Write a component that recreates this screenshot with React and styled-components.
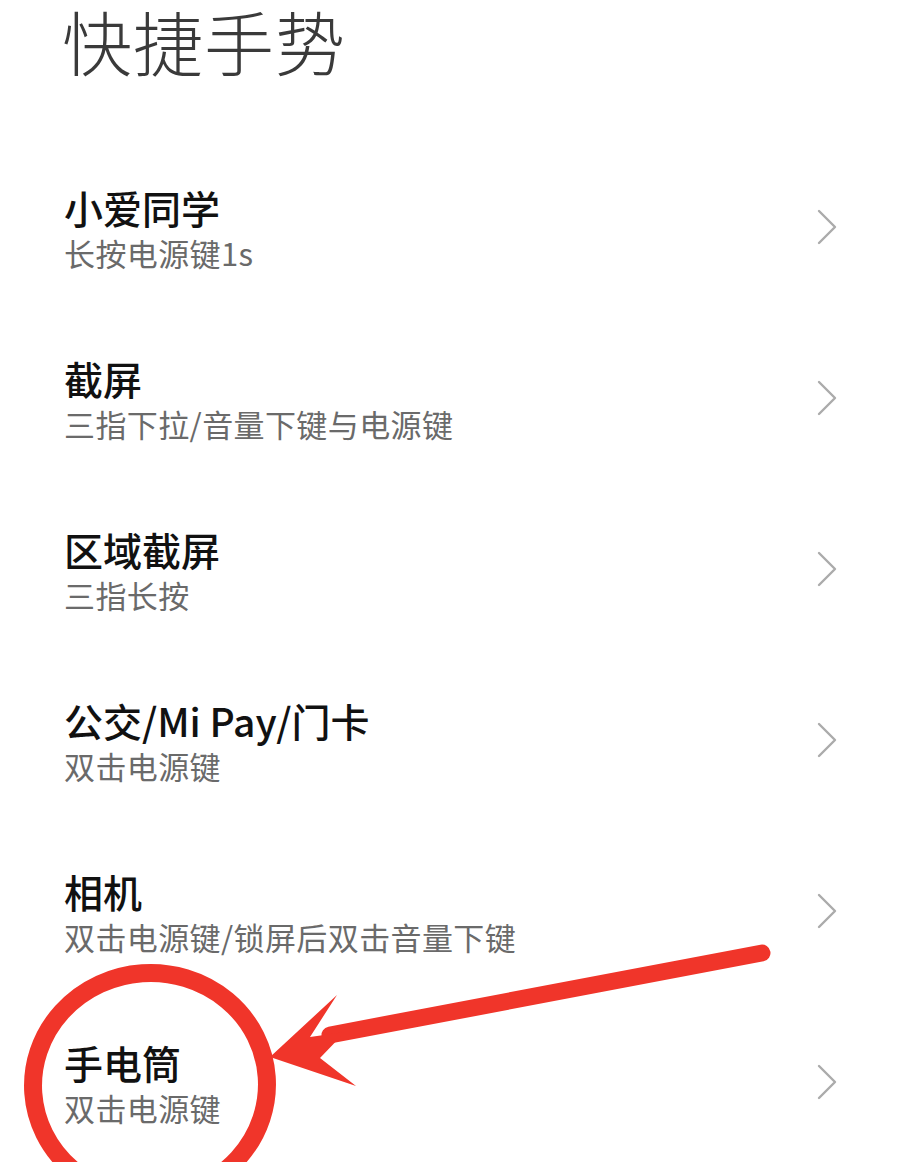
import React from 'react';
import styled, { createGlobalStyle } from 'styled-components';

const GlobalStyle = createGlobalStyle`
  html, body {
    margin: 0;
    padding: 0;
    background: #ffffff;
    overflow: hidden;
  }
  body {
    font-family: "Noto Sans CJK SC", "Noto Sans", sans-serif;
  }
`;

const items = [
  { title: '小爱同学', desc: '长按电源键1s' },
  { title: '截屏', desc: '三指下拉/音量下键与电源键' },
  { title: '区域截屏', desc: '三指长按' },
  { title: '公交/Mi Pay/门卡', desc: '双击电源键' },
  { title: '相机', desc: '双击电源键/锁屏后双击音量下键' },
  { title: '手电筒', desc: '双击电源键' },
];

const Chevron = () => (
  <svg width="22" height="36" viewBox="0 0 22 36" fill="none">
    <path d="M3 2 L19 18 L3 34" stroke="#ababab" strokeWidth="2.4" strokeLinecap="round" strokeLinejoin="round" />
  </svg>
);

const Annotation = () => (
  <Overlay width="900" height="1162" viewBox="0 0 900 1162">
    <ellipse cx="150" cy="1085" rx="117" ry="112" fill="none" stroke="#f0352a" strokeWidth="18" transform="rotate(-4 150 1085)" />
    <line x1="330" y1="1035" x2="762" y2="953" stroke="#f0352a" strokeWidth="17" strokeLinecap="round" />
    <polygon points="270,1057 337,995 310,1037 345,1032 320,1058 356,1086" fill="#f0352a" />
  </Overlay>
);

export default function App() {
  return (
    <Page>
      <GlobalStyle />
      <Header>快捷手势</Header>
      <List>
        {items.map((it) => (
          <Row key={it.title}>
            <Texts>
              <Title>{it.title}</Title>
              <Desc>{it.desc}</Desc>
            </Texts>
            <Arrow><Chevron /></Arrow>
          </Row>
        ))}
      </List>
      <Annotation />
    </Page>
  );
}

const Page = styled.div`
  position: relative;
  width: 900px;
  height: 1162px;
  overflow: hidden;
  background: #fff;
`;

const Header = styled.h1`
  margin: 0;
  padding: 0 0 0 62px;
  height: 82px;
  line-height: 82px;
  font-size: 70px;
  font-weight: 300;
  color: #3a3a3a;
  letter-spacing: 1px;
`;

const List = styled.div`
  display: flex;
  flex-direction: column;
  margin-top: 62px;
`;

const Row = styled.div`
  display: flex;
  align-items: center;
  justify-content: space-between;
  height: 171px;
  padding: 0 62px 0 64px;
`;

const Texts = styled.div`
  display: flex;
  flex-direction: column;
`;

const Title = styled.div`
  font-size: 39px;
  line-height: 46px;
  font-weight: 500;
  color: #111;
`;

const Desc = styled.div`
  font-size: 31px;
  line-height: 46px;
  color: #6a6a6a;
  letter-spacing: 0.4px;
`;

const Arrow = styled.div`
  display: flex;
  align-items: center;
  margin-top: -6px;
`;

const Overlay = styled.svg`
  position: absolute;
  top: 0;
  left: 0;
  pointer-events: none;
`;
